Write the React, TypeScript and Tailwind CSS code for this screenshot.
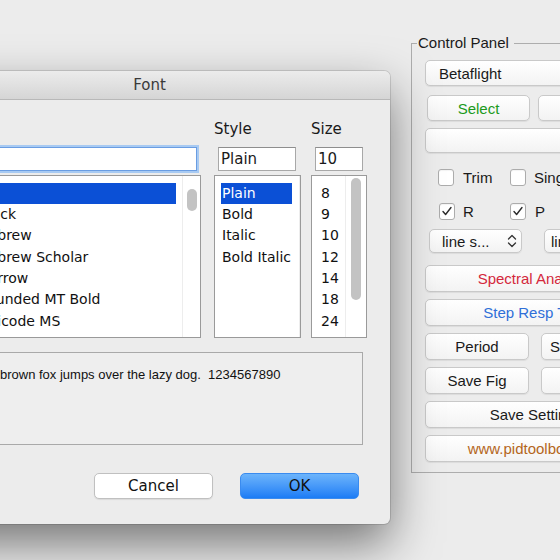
import React from "react";

const btn =
  "flex items-center justify-center rounded-[5px] border border-[#c9c9c9] bg-linear-to-b from-white to-[#f3f3f3] shadow-[0_1px_1px_rgba(0,0,0,0.07)] text-[15px] leading-none whitespace-nowrap overflow-hidden";

function Check({ checked }: { checked?: boolean }) {
  return (
    <div className="w-[16px] h-[17px] rounded-[3px] border border-[#acacac] bg-white shadow-[inset_0_1px_1px_rgba(0,0,0,0.05)] flex items-center justify-center shrink-0">
      {checked && (
        <svg width="12" height="12" viewBox="0 0 12 12">
          <path d="M2 6.5 L4.6 9.5 L10 2.5" fill="none" stroke="#2c2c2c" strokeWidth="1.4" strokeLinecap="round" strokeLinejoin="round" />
        </svg>
      )}
    </div>
  );
}

function UpDown() {
  return (
    <svg width="10" height="14" viewBox="0 0 10 14" className="shrink-0">
      <path d="M1.5 5 L5 1.5 L8.5 5" fill="none" stroke="#333" strokeWidth="1.3" strokeLinecap="round" strokeLinejoin="round" />
      <path d="M1.5 9 L5 12.5 L8.5 9" fill="none" stroke="#333" strokeWidth="1.3" strokeLinecap="round" strokeLinejoin="round" />
    </svg>
  );
}

function ControlPanel() {
  return (
    <div className="absolute left-[411px] top-[43px] w-[262px] h-[430px] border border-[#adadad] font-['Liberation_Sans',Arial,sans-serif] text-[#1a1a1a]">
      <span className="absolute left-[5px] top-[-10px] px-[1px] pr-[5px] bg-[#ececec] text-[15px] leading-[18px]">Control Panel</span>
      <div className="flex flex-col pl-[13px] pt-[16px] w-[236px]">
        <div className={btn + " h-[26px] w-[222px] !justify-start pl-[13px]"}>Betaflight</div>
        <div className="flex mt-[9px]">
          <div className={btn + " h-[26px] w-[103px] ml-[2px] text-[#1c9a1c]"}>Select</div>
          <div className={btn + " h-[26px] w-[103px] ml-[8px]"}>Load</div>
        </div>
        <div className={btn + " h-[25px] w-[222px] mt-[7px]"}></div>
        <div className="flex items-center mt-[16px] h-[17px] text-[15px] leading-none">
          <div className="flex items-center w-[72px] ml-[13px] gap-[9px]">
            <Check />
            <span>Trim</span>
          </div>
          <div className="flex items-center gap-[8px]">
            <Check />
            <span>Single</span>
          </div>
        </div>
        <div className="flex items-center mt-[17px] h-[16px] text-[15px] leading-none">
          <div className="flex items-center w-[71px] ml-[14px] gap-[8px]">
            <Check checked />
            <span>R</span>
          </div>
          <div className="flex items-center gap-[9px]">
            <Check checked />
            <span>P</span>
          </div>
        </div>
        <div className="flex mt-[10px]">
          <div className={btn + " h-[24px] w-[93px] ml-[4px] !justify-between pl-[12px] pr-[4px]"}>
            <span>line s...</span>
            <UpDown />
          </div>
          <div className={btn + " h-[24px] w-[93px] ml-[22px] !justify-between pl-[6px] pr-[4px]"}>
            <span>line w...</span>
            <UpDown />
          </div>
        </div>
        <div className={btn + " h-[27px] w-[222px] mt-[12px] text-[#d4283c]"}>Spectral Analyzer</div>
        <div className={btn + " h-[27px] w-[222px] mt-[7px] text-[#2f6fd8] pr-[4px]"}>Step Resp Tool</div>
        <div className="flex mt-[7px]">
          <div className={btn + " h-[27px] w-[104px]"}>Period</div>
          <div className={btn + " h-[27px] w-[104px] ml-[12px]"}>Spectrogram</div>
        </div>
        <div className="flex mt-[7px]">
          <div className={btn + " h-[27px] w-[104px]"}>Save Fig</div>
          <div className={btn + " h-[27px] w-[104px] ml-[12px]"}>Reset</div>
        </div>
        <div className={btn + " h-[27px] w-[222px] mt-[7px]"}>Save Settings</div>
        <div className={btn + " h-[27px] w-[222px] mt-[7px] text-[#b4661c]"}>www.pidtoolbox.com</div>
      </div>
    </div>
  );
}

function ListBox({
  items,
  selected,
  width,
  thumbTop,
  thumbH,
  trackW,
  hlRight,
  padLeft,
}: {
  items: string[];
  selected: number;
  width: number;
  thumbTop: number;
  thumbH: number;
  trackW: number;
  hlRight: number;
  padLeft: number;
}) {
  return (
    <div
      className="mt-[4px] h-[163px] border border-[#9a9a9a] bg-white flex overflow-hidden"
      style={{ width }}
    >
      <div className="flex-1 flex flex-col pt-[6.7px] text-[14px]" style={{ paddingRight: hlRight, paddingLeft: padLeft }}>
        {items.map((t, i) => (
          <div
            key={t}
            className={
              "h-[21.33px] leading-[21px] pl-[1px] whitespace-nowrap shrink-0 " +
              (i === selected ? "bg-[#0b50d6] text-white" : "text-[#111]")
            }
          >
            {t}
          </div>
        ))}
      </div>
      <div className="shrink-0 border-l border-[#ededed] flex justify-center" style={{ width: trackW }}>
        <div className="w-[10px] rounded-[5px] bg-[#c3c3c3]" style={{ marginTop: thumbTop, height: thumbH }} />
      </div>
    </div>
  );
}

function FontDialog() {
  return (
    <div className="absolute left-[-87px] top-[71px] w-[477px] h-[453px] rounded-[6px] bg-[#ececec] shadow-[0_20px_48px_rgba(0,0,0,0.5),0_0_0_1px_rgba(0,0,0,0.12)] flex flex-col overflow-hidden font-['DejaVu_Sans',sans-serif] text-[#1a1a1a]">
      <div className="h-[29px] shrink-0 border-b border-[#b8b8b8] bg-linear-to-b from-[#ececec] to-[#d5d5d5] flex items-center justify-center text-[15px] text-[#3a3a3a] pr-[4px]">
        Font
      </div>
      <div className="flex flex-col pl-[24px] pr-[23px] pt-[20px]">
        <div className="flex">
          <div className="flex flex-col w-[264px]">
            <div className="h-[18px] leading-[18px] text-[15px]">Font</div>
            <div className="mt-[9px] h-[24px] mr-[4px] ml-[4px] bg-white border border-[#6a9de2] shadow-[0_0_0_2px_#a8caf2] text-[15px] leading-[22px] pl-[2px]">Arial</div>
            <ListBox
              items={["Arial", "Arial Black", "Arial Hebrew", "Arial Hebrew Scholar", "Arial Narrow", "Arial Rounded MT Bold", "Arial Unicode MS", "Avenir"]}
              selected={0}
              width={264}
              thumbTop={13}
              thumbH={22}
              trackW={18}
              hlRight={6}
              padLeft={3}
            />
          </div>
          <div className="flex flex-col w-[87px] ml-[13px]">
            <div className="h-[18px] leading-[18px] text-[15px]">Style</div>
            <div className="mt-[9px] h-[24px] ml-[4px] mr-[5px] bg-white border border-[#a8a8a8] border-t-[#8e8e8e] text-[15px] leading-[22px] pl-[2px]">Plain</div>
            <ListBox items={["Plain", "Bold", "Italic", "Bold Italic"]} selected={0} width={87} thumbTop={0} thumbH={0} trackW={0} hlRight={7} padLeft={6} />
          </div>
          <div className="flex flex-col w-[56px] ml-[10px]">
            <div className="h-[18px] leading-[18px] text-[15px]">Size</div>
            <div className="mt-[9px] h-[24px] ml-[4px] mr-[4px] bg-white border border-[#a8a8a8] border-t-[#8e8e8e] text-[15px] leading-[22px] pl-[2px]">10</div>
            <ListBox items={["8", "9", "10", "12", "14", "18", "24", "36"]} selected={-1} width={56} thumbTop={2} thumbH={122} trackW={21} hlRight={0} padLeft={8} />
          </div>
        </div>
        <div className="mt-[14px] h-[93px] w-[426px] border border-[#a9a9a9] bg-[#eeeeee] pl-[2px] pt-[14px] font-['Liberation_Sans',Arial,sans-serif] text-[13px] leading-[15px] whitespace-pre text-[#111]">
          {"The quick brown fox jumps over the lazy dog.  1234567890"}
        </div>
        <div className="flex justify-end mt-[28px] mr-[8px] gap-[27px]">
          <div className="w-[119px] h-[26px] rounded-[5px] bg-white border border-[#c0c0c0] shadow-[0_1px_1px_rgba(0,0,0,0.08)] flex items-center justify-center text-[15px] text-[#111]">
            Cancel
          </div>
          <div className="w-[119px] h-[26px] rounded-[5px] bg-linear-to-b from-[#6cb4fb] to-[#1a7cf5] border border-[#3a8bef] flex items-center justify-center text-[15px] text-[#111]">
            OK
          </div>
        </div>
      </div>
    </div>
  );
}

export default function App() {
  return (
    <div className="relative w-[560px] h-[560px] overflow-hidden bg-[#ececec]">
      <ControlPanel />
      <FontDialog />
    </div>
  );
}
